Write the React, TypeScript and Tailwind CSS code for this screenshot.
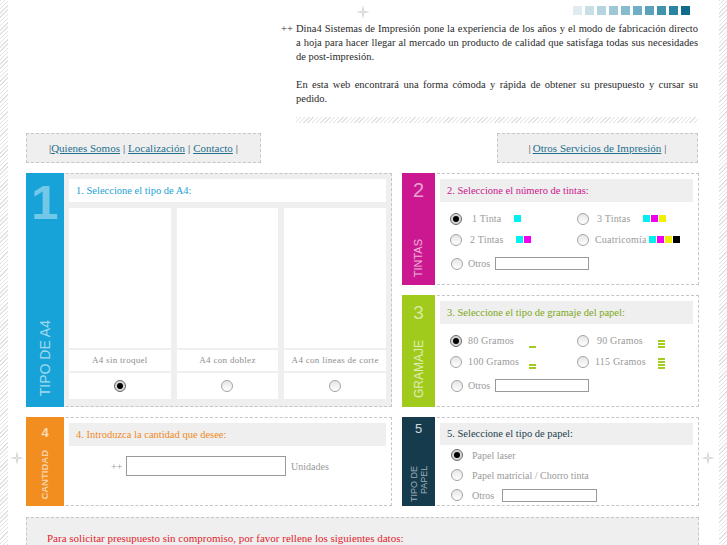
import React from "react";

const Star = () => (
  <svg width="14" height="14" viewBox="0 0 14 14">
    <path d="M7 0 L8.1 5.9 L14 7 L8.1 8.1 L7 14 L5.9 8.1 L0 7 L5.9 5.9 Z" fill="#cdcdcd" />
    <circle cx="7" cy="7" r="1.7" fill="#e4e4e4" />
  </svg>
);

const Radio = ({ on = false }: { on?: boolean }) => (
  <span
    className={`flex h-[12px] w-[12px] shrink-0 items-center justify-center rounded-full border ${
      on ? "border-[#6a6a6a] bg-[#d6d6d6]" : "border-[#a3a3a3] bg-linear-to-b from-[#e6e6e6] to-white"
    }`}
  >
    {on && <span className="h-[6px] w-[6px] rounded-full bg-black" />}
  </span>
);

const Sq = ({ c }: { c: string }) => <span className={`h-[7px] w-[7px] ${c}`} />;

const Bars = ({ n }: { n: number }) => (
  <span className="flex h-[12px] translate-y-[1px] flex-col justify-end gap-[1px]">
    {Array.from({ length: n }).map((_, i) => (
      <span key={i} className="h-[2px] w-[7px] bg-[#a2cc1f]" />
    ))}
  </span>
);

const Field = ({ w }: { w: string }) => (
  <span className={`block h-[13px] border border-[#9a9a9a] bg-white ${w}`} />
);

const Opt = ({ on, label, w, ml, children }: { on?: boolean; label: string; w: string; ml: string; children?: React.ReactNode }) => (
  <div className="flex items-center">
    <Radio on={on} />
    <span className={`text-[10px] tracking-[0.2px] text-[#9a9a9a] ${ml} ${w}`}>{label}</span>
    {children}
  </div>
);

const sans = "[font-family:'Liberation_Sans',Arial,sans-serif]";

const A4Col = ({ label, on }: { label: string; on?: boolean }) => (
  <div className="flex flex-col gap-[2px]">
    <div className="h-[140px] bg-white" />
    <div className="flex h-[21px] items-center justify-center bg-white text-[9px] tracking-[0.3px] text-[#8e8e8e]">{label}</div>
    <div className="flex h-[26px] items-center justify-center bg-white">
      <Radio on={on} />
    </div>
  </div>
);

export default function App() {
  const hatch = "bg-[repeating-linear-gradient(135deg,#e2e2e2_0px,#e2e2e2_1px,#ffffff_1px,#ffffff_3px)]";
  return (
    <div className="relative flex min-h-[545px] w-full overflow-hidden bg-white text-[#2a2a2a] [font-family:'Liberation_Serif','Times_New_Roman',serif]">
      <div className={`w-[8px] shrink-0 ${hatch}`} />

      <div className="flex-1 pl-[18px] pr-[20px]">
        {/* top: logo space + intro */}
        <div className="flex h-[133px]">
          <div className="w-[255px] shrink-0" />
          <div className="flex flex-1 flex-col">
            <div className="flex justify-end gap-[3px] pr-[9px] pt-[6px]">
              {["bg-[#dfebef]", "bg-[#c9dfe7]", "bg-[#b4d4df]", "bg-[#9ec8d7]", "bg-[#87bccf]", "bg-[#6faec4]", "bg-[#5aa1ba]", "bg-[#4193ae]", "bg-[#2a84a2]", "bg-[#0f6c8d]"].map((c) => (
                <span key={c} className={`h-[9px] w-[9px] ${c}`} />
              ))}
            </div>
            <div className="mt-[7px] flex text-[10.5px] leading-[14px]">
              <span className="w-[15px] shrink-0">++</span>
              <div className="flex-1 pr-[1px] text-justify">
                <p>
                  Dina4 Sistemas de Impresión pone la experiencia de los años y el modo de fabricación directo a hoja para hacer llegar al mercado un producto de calidad que satisfaga todas sus necesidades de post-impresión.
                </p>
                <p className="mt-[14px]">
                  En esta web encontrará una forma cómoda y rápida de obtener su presupuesto y cursar su pedido.
                </p>
              </div>
            </div>
            <div className={`ml-[15px] mr-[1px] mt-[11px] h-[6px] ${hatch}`} />
          </div>
        </div>

        {/* nav */}
        <div className="flex h-[30px] justify-between text-[11px]">
          <div className="flex w-[235px] items-center justify-center border border-dashed border-[#c6c6c6] bg-[#efefef] text-[#444]">
            <span>|</span>
            <a className="text-[#1f6f8e] underline">Quienes Somos</a>
            <span className="mx-[3px]">|</span>
            <a className="text-[#1f6f8e] underline">Localización</a>
            <span className="mx-[3px]">|</span>
            <a className="text-[#1f6f8e] underline">Contacto</a>
            <span className="ml-[3px]">|</span>
          </div>
          <div className="mr-[1px] flex w-[201px] items-center justify-center border border-dashed border-[#c6c6c6] bg-[#efefef] text-[#444]">
            <span className="mr-[2px]">|</span>
            <a className="text-[#1f6f8e] underline">Otros Servicios de Impresión</a>
            <span className="ml-[3px]">|</span>
          </div>
        </div>

        {/* panels */}
        <div className="mt-[10px] grid grid-cols-[366px_297px] grid-rows-[112px_112px_89px] gap-[10px]">
          {/* 1 */}
          <div className="row-span-2 flex border border-dashed border-[#c6c6c6] bg-[#efefef]">
            <div className={`-my-px -ml-px flex w-[38px] shrink-0 flex-col items-center justify-between bg-[#17a3d8] pb-[11px] pt-[5px] ${sans}`}>
              <span className="text-[49px] font-bold leading-none text-white/40">1</span>
              <span className="rotate-180 text-[14px] leading-none text-white/60 [writing-mode:vertical-rl]">TIPO DE A4</span>
            </div>
            <div className="flex flex-1 flex-col pb-[7px] pl-[5px] pr-[5px] pt-[5px]">
              <div className="flex h-[23px] items-center bg-white pl-[7px] text-[10.5px] text-[#23a1d5]">1. Seleccione el tipo de A4:</div>
              <div className="mt-[6px] grid grid-cols-3 gap-[6px]">
                <A4Col label="A4 sin troquel" on />
                <A4Col label="A4 con doblez" />
                <A4Col label="A4 con lineas de corte" />
              </div>
            </div>
          </div>

          {/* 2 */}
          <div className="flex border border-dashed border-[#c6c6c6] bg-white">
            <div className={`-my-px -ml-px flex w-[33px] shrink-0 flex-col items-center justify-between bg-[#cb1891] pb-[8px] pt-[7px] ${sans}`}>
              <span className="text-[20px] leading-none text-white/60">2</span>
              <span className="rotate-180 text-[11px] leading-none text-white/65 [writing-mode:vertical-rl]">TINTAS</span>
            </div>
            <div className="flex flex-1 flex-col pl-[5px] pr-[5px] pt-[5px]">
              <div className="flex h-[23px] items-center bg-[#efefef] pl-[7px] text-[10.5px] text-[#c9168e]">2. Seleccione el número de tintas:</div>
              <div className="mt-[6px] grid grid-cols-[127px_1fr] grid-rows-[21px_21px] pl-[10px]">
                <Opt on label="1 Tinta" ml="ml-[10px]" w="w-[42px]">
                  <div className="flex gap-[1px]"><Sq c="bg-[#00f0f0]" /></div>
                </Opt>
                <Opt label="3 Tintas" ml="ml-[8px]" w="w-[46px]">
                  <div className="flex gap-[1px]"><Sq c="bg-[#00f0f0]" /><Sq c="bg-[#f000f0]" /><Sq c="bg-[#f0f000]" /></div>
                </Opt>
                <Opt label="2 Tintas" ml="ml-[8px]" w="w-[46px]">
                  <div className="flex gap-[1px]"><Sq c="bg-[#00f0f0]" /><Sq c="bg-[#f000f0]" /></div>
                </Opt>
                <Opt label="Cuatricomía" ml="ml-[6px]" w="w-[54px]">
                  <div className="flex gap-[1px]"><Sq c="bg-[#00f0f0]" /><Sq c="bg-[#f000f0]" /><Sq c="bg-[#f0f000]" /><Sq c="bg-black" /></div>
                </Opt>
              </div>
              <div className="mt-[3px] flex h-[21px] items-center pl-[11px]">
                <Radio />
                <span className="ml-[5px] mr-[5px] text-[10px] text-[#9a9a9a]">Otros</span>
                <Field w="w-[94px]" />
              </div>
            </div>
          </div>

          {/* 3 */}
          <div className="flex border border-dashed border-[#c6c6c6] bg-white">
            <div className={`-my-px -ml-px flex w-[33px] shrink-0 flex-col items-center justify-between bg-[#a0cb1c] pb-[9px] pt-[8px] ${sans}`}>
              <span className="text-[19px] leading-none text-white/60">3</span>
              <span className="rotate-180 text-[12px] leading-none text-white/65 [writing-mode:vertical-rl]">GRAMAJE</span>
            </div>
            <div className="flex flex-1 flex-col pl-[5px] pr-[5px] pt-[5px]">
              <div className="flex h-[23px] items-center bg-[#efefef] pl-[7px] text-[10.5px] text-[#7ea817]">3. Seleccione el tipo de gramaje del papel:</div>
              <div className="mt-[6px] grid grid-cols-[127px_1fr] grid-rows-[21px_21px] pl-[10px]">
                <Opt on label="80 Gramos" ml="ml-[6px]" w="w-[61px]"><Bars n={1} /></Opt>
                <Opt label="90 Gramos" ml="ml-[8px]" w="w-[61px]"><Bars n={3} /></Opt>
                <Opt label="100 Gramos" ml="ml-[6px]" w="w-[61px]"><Bars n={2} /></Opt>
                <Opt label="115 Gramos" ml="ml-[6px]" w="w-[63px]"><Bars n={4} /></Opt>
              </div>
              <div className="mt-[3px] flex h-[21px] items-center pl-[11px]">
                <Radio />
                <span className="ml-[5px] mr-[5px] text-[10px] text-[#9a9a9a]">Otros</span>
                <Field w="w-[94px]" />
              </div>
            </div>
          </div>

          {/* 4 */}
          <div className="flex border border-dashed border-[#c6c6c6] bg-white">
            <div className={`-my-px -ml-px flex w-[38px] shrink-0 flex-col items-center justify-between bg-[#f28d1f] pb-[6px] pt-[9px] ${sans}`}>
              <span className="text-[13px] font-bold leading-none text-white/70">4</span>
              <span className="rotate-180 text-[9.5px] font-bold leading-none text-white/60 [writing-mode:vertical-rl]">CANTIDAD</span>
            </div>
            <div className="flex flex-1 flex-col pl-[5px] pr-[5px] pt-[5px]">
              <div className="flex h-[23px] items-center bg-[#efefef] pl-[7px] text-[10.5px] text-[#f08a1b]">4. Introduzca la cantidad que desee:</div>
              <div className="mt-[10px] flex h-[20px] items-center pl-[42px] text-[10px] text-[#9a9a9a]">
                <span className="w-[15px]">++</span>
                <span className="block h-[20px] w-[160px] border border-[#9a9a9a] bg-white" />
                <span className="ml-[5px]">Unidades</span>
              </div>
            </div>
          </div>

          {/* 5 */}
          <div className="flex border border-dashed border-[#c6c6c6] bg-white">
            <div className={`-my-px -ml-px flex w-[33px] shrink-0 flex-col items-center justify-between bg-[#153b4d] pb-[4px] pt-[5px] ${sans}`}>
              <span className="text-[13px] leading-none text-white/80">5</span>
              <span className="rotate-180 text-right text-[9px] leading-[10px] text-white/60 [writing-mode:vertical-rl]">TIPO DE<br />PAPEL</span>
            </div>
            <div className="flex flex-1 flex-col pl-[5px] pr-[5px] pt-[5px]">
              <div className="flex h-[23px] items-center bg-[#efefef] pl-[7px] text-[10.5px] text-[#1d3d4d]">5. Seleccione el tipo de papel:</div>
              <div className="flex flex-col pl-[11px] text-[10px] text-[#9a9a9a]">
                <div className="flex h-[20px] items-center"><Radio on /><span className="ml-[9px]">Papel laser</span></div>
                <div className="flex h-[20px] items-center"><Radio /><span className="ml-[9px]">Papel matricial / Chorro tinta</span></div>
                <div className="flex h-[20px] items-center">
                  <Radio />
                  <span className="ml-[9px] w-[30px]">Otros</span>
                  <Field w="w-[95px]" />
                </div>
              </div>
            </div>
          </div>
        </div>

        {/* bottom */}
        <div className="mt-[11px] h-[60px] border border-dashed border-[#c6c6c6] bg-[#efefef] pl-[20px] pt-[12px] text-[11px] text-[#e3222c]">
          Para solicitar presupuesto sin compromiso, por favor rellene los siguientes datos:
        </div>
      </div>

      <div className={`w-[8px] shrink-0 ${hatch}`} />

      <div className="absolute left-[356px] top-[5px]"><Star /></div>
      <div className="absolute left-[10px] top-[451px]"><Star /></div>
      <div className="absolute left-[701px] top-[451px]"><Star /></div>
    </div>
  );
}
